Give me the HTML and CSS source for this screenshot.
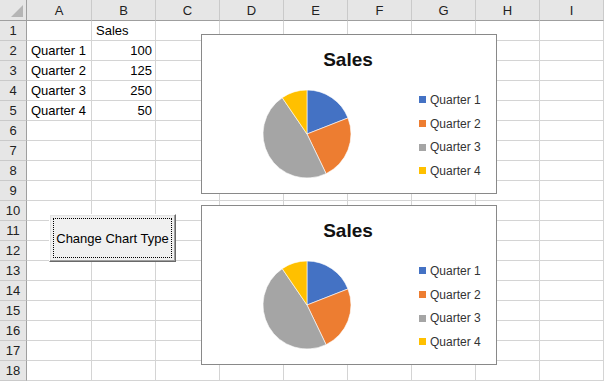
FILE: index.html
```html
<!DOCTYPE html>
<html lang="en">
<head>
	<meta charset="UTF-8">
	<title>Change Chart Type</title>
	<link rel="stylesheet" href="styles.css">
</head>
<body>
	<div class="wrapper">
		<!--grid-->
		<div class="sheet">
			<div class="corner"></div>
			<div class="colhead a">A</div><div class="colhead">B</div><div class="colhead">C</div><div class="colhead">D</div><div class="colhead">E</div><div class="colhead">F</div><div class="colhead">G</div><div class="colhead">H</div><div class="colhead">I</div>

			<div class="rowhead">1</div><div class="c"></div><div class="c">Sales</div><div class="c"></div><div class="c"></div><div class="c"></div><div class="c"></div><div class="c"></div><div class="c"></div><div class="c"></div>
			<div class="rowhead">2</div><div class="c">Quarter 1</div><div class="c num">100</div><div class="c"></div><div class="c"></div><div class="c"></div><div class="c"></div><div class="c"></div><div class="c"></div><div class="c"></div>
			<div class="rowhead">3</div><div class="c">Quarter 2</div><div class="c num">125</div><div class="c"></div><div class="c"></div><div class="c"></div><div class="c"></div><div class="c"></div><div class="c"></div><div class="c"></div>
			<div class="rowhead">4</div><div class="c">Quarter 3</div><div class="c num">250</div><div class="c"></div><div class="c"></div><div class="c"></div><div class="c"></div><div class="c"></div><div class="c"></div><div class="c"></div>
			<div class="rowhead">5</div><div class="c">Quarter 4</div><div class="c num">50</div><div class="c"></div><div class="c"></div><div class="c"></div><div class="c"></div><div class="c"></div><div class="c"></div><div class="c"></div>
			<div class="rowhead">6</div><div class="c"></div><div class="c"></div><div class="c"></div><div class="c"></div><div class="c"></div><div class="c"></div><div class="c"></div><div class="c"></div><div class="c"></div>
			<div class="rowhead">7</div><div class="c"></div><div class="c"></div><div class="c"></div><div class="c"></div><div class="c"></div><div class="c"></div><div class="c"></div><div class="c"></div><div class="c"></div>
			<div class="rowhead">8</div><div class="c"></div><div class="c"></div><div class="c"></div><div class="c"></div><div class="c"></div><div class="c"></div><div class="c"></div><div class="c"></div><div class="c"></div>
			<div class="rowhead">9</div><div class="c"></div><div class="c"></div><div class="c"></div><div class="c"></div><div class="c"></div><div class="c"></div><div class="c"></div><div class="c"></div><div class="c"></div>
			<div class="rowhead">10</div><div class="c"></div><div class="c"></div><div class="c"></div><div class="c"></div><div class="c"></div><div class="c"></div><div class="c"></div><div class="c"></div><div class="c"></div>
			<div class="rowhead">11</div><div class="c"></div><div class="c"></div><div class="c"></div><div class="c"></div><div class="c"></div><div class="c"></div><div class="c"></div><div class="c"></div><div class="c"></div>
			<div class="rowhead">12</div><div class="c"></div><div class="c"></div><div class="c"></div><div class="c"></div><div class="c"></div><div class="c"></div><div class="c"></div><div class="c"></div><div class="c"></div>
			<div class="rowhead">13</div><div class="c"></div><div class="c"></div><div class="c"></div><div class="c"></div><div class="c"></div><div class="c"></div><div class="c"></div><div class="c"></div><div class="c"></div>
			<div class="rowhead">14</div><div class="c"></div><div class="c"></div><div class="c"></div><div class="c"></div><div class="c"></div><div class="c"></div><div class="c"></div><div class="c"></div><div class="c"></div>
			<div class="rowhead">15</div><div class="c"></div><div class="c"></div><div class="c"></div><div class="c"></div><div class="c"></div><div class="c"></div><div class="c"></div><div class="c"></div><div class="c"></div>
			<div class="rowhead">16</div><div class="c"></div><div class="c"></div><div class="c"></div><div class="c"></div><div class="c"></div><div class="c"></div><div class="c"></div><div class="c"></div><div class="c"></div>
			<div class="rowhead">17</div><div class="c"></div><div class="c"></div><div class="c"></div><div class="c"></div><div class="c"></div><div class="c"></div><div class="c"></div><div class="c"></div><div class="c"></div>
			<div class="rowhead">18</div><div class="c"></div><div class="c"></div><div class="c"></div><div class="c"></div><div class="c"></div><div class="c"></div><div class="c"></div><div class="c"></div><div class="c"></div>
		</div>

		<!--button over the cells-->
		<button class="btn" type="button"><span class="focus">Change Chart Type</span></button>

		<!--two charts-->
		<div class="chart chart-1">
			<div class="chart-title">Sales</div>
			<div class="chart-body">
				<svg class="pie" viewBox="-44 -44 88 88" width="88" height="88">
					<path class="q1" d="M0 0L0 -44A44 44 0 0 1 40.96 -16.07Z"/>
					<path class="q2" d="M0 0L40.96 -16.07A44 44 0 0 1 19.09 39.64Z"/>
					<path class="q3" d="M0 0L19.09 39.64A44 44 0 0 1 -24.79 -36.35Z"/>
					<path class="q4" d="M0 0L-24.79 -36.35A44 44 0 0 1 0 -44Z"/>
				</svg>
				<ul class="legend">
					<li><span class="swatch q1"></span>Quarter 1</li>
					<li><span class="swatch q2"></span>Quarter 2</li>
					<li><span class="swatch q3"></span>Quarter 3</li>
					<li><span class="swatch q4"></span>Quarter 4</li>
				</ul>
			</div>
		</div>
		<div class="chart chart-2">
			<div class="chart-title">Sales</div>
			<div class="chart-body">
				<svg class="pie" viewBox="-44 -44 88 88" width="88" height="88">
					<path class="q1" d="M0 0L0 -44A44 44 0 0 1 40.96 -16.07Z"/>
					<path class="q2" d="M0 0L40.96 -16.07A44 44 0 0 1 19.09 39.64Z"/>
					<path class="q3" d="M0 0L19.09 39.64A44 44 0 0 1 -24.79 -36.35Z"/>
					<path class="q4" d="M0 0L-24.79 -36.35A44 44 0 0 1 0 -44Z"/>
				</svg>
				<ul class="legend">
					<li><span class="swatch q1"></span>Quarter 1</li>
					<li><span class="swatch q2"></span>Quarter 2</li>
					<li><span class="swatch q3"></span>Quarter 3</li>
					<li><span class="swatch q4"></span>Quarter 4</li>
				</ul>
			</div>
		</div>
	</div>
</body>
</html>
```
FILE: styles.css
```css
body{
	margin:0;
	background:#fff;
	font-family:"Liberation Sans",Arial,sans-serif;
	color:#000;
}
.wrapper{
	position:relative;
	width:604px;
	height:381px;
	overflow:hidden;
}
/*grid*/
.sheet{
	display:grid;
	grid-template-columns:27px 65px repeat(8,64px);
	grid-template-rows:21px;
	grid-auto-rows:20px;
}
.sheet>div{
	box-sizing:border-box;
	font-size:13px;
	line-height:19px;
	white-space:nowrap;
	overflow:hidden;
}
.corner{
	display:flex;
	align-items:flex-end;
	justify-content:flex-end;
	padding:0 3px 3px 0;
	background:#e6e6e6;
	border-right:1px solid #9f9f9f;
	border-bottom:1px solid #9f9f9f;
}
.corner::after{
	content:"";
	border-left:12px solid transparent;
	border-bottom:12px solid #b5b5b5;
}
.colhead{
	background:#e6e6e6;
	border-right:1px solid #cacaca;
	border-bottom:1px solid #9f9f9f;
	text-align:center;
	line-height:21px !important;
	color:#222;
}
.rowhead{
	background:#e6e6e6;
	border-right:1px solid #9f9f9f;
	border-bottom:1px solid #cacaca;
	text-align:center;
	color:#222;
}
.c{
	border-right:1px solid #d4d4d4;
	border-bottom:1px solid #d4d4d4;
	padding:0 3px 0 4px;
}
.num{
	text-align:right;
}
/*button*/
.btn{
	position:absolute;
	left:49px;
	top:214px;
	width:127px;
	height:48px;
	padding:3px;
	margin:0;
	background:#f0f0f0;
	border:1px solid;
	border-color:#fff #696969 #696969 #fff;
	box-shadow:inset -1px -1px 0 #a0a0a0,inset 1px 1px 0 #e3e3e3;
	font-family:"Liberation Sans",Arial,sans-serif;
	font-size:13px;
	color:#000;
}
.focus{
	display:flex;
	align-items:center;
	justify-content:center;
	height:100%;
	border:1px dotted #000;
	box-sizing:border-box;
	white-space:nowrap;
}
/*charts*/
.chart{
	position:absolute;
	left:201px;
	width:296px;
	height:160px;
	box-sizing:border-box;
	border:1px solid #898989;
	background:#fff;
}
.chart-1{top:34px;}
.chart-2{top:205px;}
.chart-title{
	margin-top:13px;
	height:24px;
	line-height:24px;
	text-align:center;
	font-size:19px;
	font-weight:bold;
	color:#111;
	padding-right:2px;
}
.chart-body{
	display:flex;
	margin-top:18px;
}
.pie{
	display:block;
	margin-left:61px;
}
.pie path{
	stroke:#fff;
	stroke-width:0.6;
}
.pie .q1{fill:#4472c4;}
.pie .q2{fill:#ed7d31;}
.pie .q3{fill:#a5a5a5;}
.pie .q4{fill:#ffc000;}
.legend{
	list-style:none;
	margin:-2px 0 0 68px;
	padding:0;
	font-size:12px;
	color:#333;
}
.legend li{
	display:flex;
	align-items:center;
	height:23.7px;
}
.swatch{
	width:7px;
	height:7px;
	margin-right:4px;
}
.swatch.q1{background:#4472c4;}
.swatch.q2{background:#ed7d31;}
.swatch.q3{background:#a5a5a5;}
.swatch.q4{background:#ffc000;}
```
